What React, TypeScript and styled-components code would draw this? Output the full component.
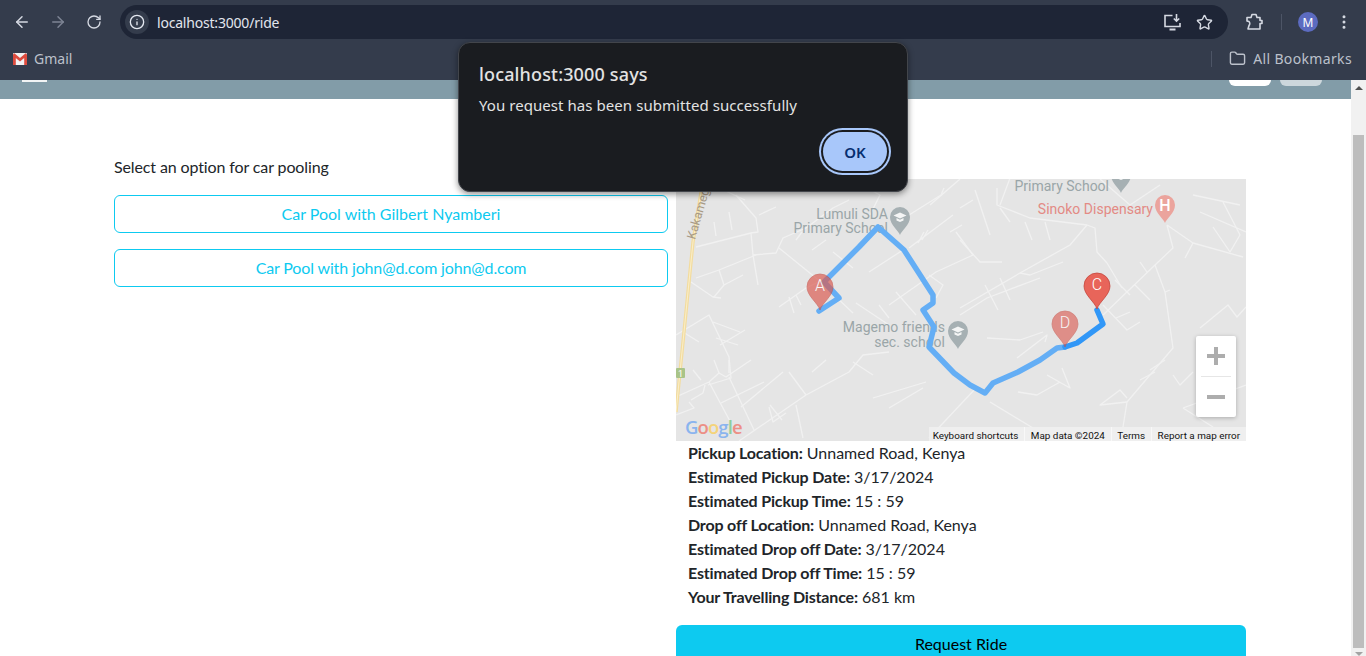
import styled, { createGlobalStyle } from "styled-components";
import {
  ArrowLeft,
  ArrowRight,
  RotateCw,
  Info,
  Star,
  EllipsisVertical,
  Folder,
} from "lucide-react";

const GlobalStyle = createGlobalStyle`
  html, body {
    margin: 0;
    padding: 0;
    width: 1366px;
    height: 656px;
    overflow: hidden;
    background: #fff;
  }
  * { box-sizing: border-box; }
`;

const Window = styled.div`
  position: relative;
  width: 1366px;
  height: 656px;
  overflow: hidden;
  display: flex;
  flex-direction: column;
  font-family: "Lato", sans-serif;
`;

const Toolbar = styled.div`
  height: 44px;
  flex: none;
  background: #343c4c;
  display: flex;
  align-items: center;
  padding: 0 4px;
`;

const NavIcon = styled.div<{ $dim?: boolean; $gap?: number }>`
  width: 36px;
  height: 36px;
  margin-left: ${(p) => p.$gap ?? 0}px;
  display: flex;
  align-items: center;
  justify-content: center;
  color: ${(p) => (p.$dim ? "#7d8494" : "#d5d9e2")};
`;

const Omnibox = styled.div`
  flex: 1;
  height: 34px;
  margin-left: 8px;
  border-radius: 17px;
  background: #1e2536;
  display: flex;
  align-items: center;
  padding: 0 10px 0 5px;
`;

const InfoChip = styled.div`
  width: 24px;
  height: 24px;
  border-radius: 50%;
  background: #343c4c;
  color: #e4e8f0;
  display: flex;
  align-items: center;
  justify-content: center;
`;

const UrlText = styled.span`
  flex: 1;
  margin-left: 8px;
  font-family: "Noto Sans", sans-serif;
  font-size: 14px;
  letter-spacing: -0.2px;
  color: #e2e6ee;
`;

const OmniAction = styled.div`
  width: 28px;
  height: 28px;
  margin-left: 4px;
  display: flex;
  align-items: center;
  justify-content: center;
  color: #d5d9e2;
`;

const ToolDivider = styled.div`
  width: 1px;
  height: 16px;
  background: #4d5566;
  margin: 0 16px 0 9px;
`;

const Avatar = styled.div`
  width: 20px;
  height: 20px;
  border-radius: 50%;
  background: #5c6bc0;
  color: #fff;
  font-family: "Noto Sans", sans-serif;
  font-size: 12px;
  display: flex;
  align-items: center;
  justify-content: center;
`;

const BookmarkBar = styled.div`
  height: 36px;
  flex: none;
  background: #343c4c;
  display: flex;
  align-items: center;
  padding: 0 14px 7px 13px;
  font-family: "Noto Sans", sans-serif;
  font-size: 14px;
  color: #bcc1cb;
`;

const BookmarkGap = styled.div`
  flex: 1;
`;

const BookmarkDivider = styled.div`
  width: 1px;
  height: 16px;
  background: #4d5566;
  margin-right: 17px;
`;

const BookmarkLabel = styled.span<{ $wide?: boolean }>`
  margin-left: 7px;
  letter-spacing: ${(p) => (p.$wide ? "0.35px" : "0")};
`;

const Viewport = styled.div`
  flex: 1;
  min-height: 0;
  display: flex;
  background: #fff;
`;

const Page = styled.div`
  flex: 1;
  min-width: 0;
  overflow: hidden;
`;

const TopNav = styled.div`
  height: 19px;
  background: #829ca8;
  display: flex;
  justify-content: space-between;
  padding: 0 29px 0 22px;
`;

const NavLine = styled.div`
  width: 25px;
  height: 2px;
  background: #f2f4f5;
`;

const NavButtons = styled.div`
  display: flex;
  gap: 9px;
`;

const NavButton = styled.div<{ $muted?: boolean }>`
  width: 42px;
  height: 6px;
  border-radius: 0 0 6px 6px;
  background: ${(p) => (p.$muted ? "#cdd7dc" : "#fff")};
`;

const Content = styled.div`
  display: grid;
  grid-template-columns: 554px 570px;
  column-gap: 8px;
  padding: 60px 0 0 114px;
`;

const LeftColumn = styled.div`
  display: flex;
  flex-direction: column;
`;

const Prompt = styled.p`
  margin: 0 0 20px;
  height: 16px;
  line-height: 16px;
  font-size: 16px;
  letter-spacing: -0.12px;
  color: #212529;
`;

const OptionButton = styled.button<{ $tight?: boolean }>`
  height: 38px;
  margin-bottom: 16px;
  padding: 0 0 2px;
  border: 1px solid #0dcaf0;
  border-radius: 6px;
  background: #fff;
  color: #0dcaf0;
  font-family: "Lato", sans-serif;
  font-size: 16px;
  letter-spacing: ${(p) => (p.$tight ? "-0.14px" : "0")};
`;

const RightColumn = styled.div`
  display: flex;
  flex-direction: column;
  margin-top: 20px;
`;

const MapBox = styled.div`
  position: relative;
  height: 262px;
  overflow: hidden;
  background: #e5e5e5;
`;

const MapArt = styled.svg`
  display: block;
  width: 570px;
  height: 262px;
`;

const GoogleMark = styled.div`
  position: absolute;
  left: 9px;
  bottom: 3px;
  font-family: "Open Sans", sans-serif;
  font-size: 18.5px;
  font-weight: 600;
  letter-spacing: -0.9px;
  line-height: 22px;
`;

const GoogleLetter = styled.span<{ $color: string }>`
  color: ${(p) => p.$color};
`;

const Attribution = styled.div`
  position: absolute;
  right: 0;
  bottom: 0;
  height: 14px;
  display: flex;
  background: rgba(240, 240, 240, 0.9);
  font-family: "Roboto", sans-serif;
  font-size: 9.9px;
  line-height: 17px;
  color: #111;
`;

const AttributionItem = styled.span`
  padding: 0 6px 0 5.5px;
  border-left: 1px solid #f8f8f8;
  white-space: nowrap;

  &:first-child {
    border-left: 0;
    padding-left: 4px;
  }
`;

const ZoomControl = styled.div`
  position: absolute;
  left: 520px;
  top: 157px;
  width: 40px;
  height: 81px;
  background: #fff;
  border-radius: 2px;
  box-shadow: 0 1px 4px rgba(0, 0, 0, 0.25);
  display: flex;
  flex-direction: column;
  align-items: center;
`;

const ZoomButton = styled.div`
  flex: 1;
  display: flex;
  align-items: center;
  justify-content: center;
`;

const ZoomDivider = styled.div`
  width: 30px;
  height: 1px;
  background: #e6e6e6;
`;

const Details = styled.div`
  padding: 0 12px;
  font-size: 16px;
  line-height: 24px;
  color: #212529;
`;

const DetailRow = styled.div`
  white-space: nowrap;
`;

const DetailLabel = styled.b`
  font-weight: 700;
  letter-spacing: -0.17px;
`;

const RequestButton = styled.button`
  flex: none;
  height: 38px;
  margin-top: 16px;
  padding: 0 0 2px;
  border: 0;
  border-radius: 6px;
  background: #0dcaf0;
  color: #000;
  font-family: "Lato", sans-serif;
  font-size: 16px;
`;

const Scrollbar = styled.div`
  width: 15px;
  flex: none;
  background: #f1f1f1;
  display: flex;
  flex-direction: column;
  align-items: center;
`;

const ScrollArrow = styled.div<{ $down?: boolean }>`
  flex: none;
  height: ${(p) => (p.$down ? "8px" : "15px")};
  width: 15px;
  display: flex;
  justify-content: center;
  align-items: ${(p) => (p.$down ? "flex-end" : "center")};

  &::after {
    content: "";
    border-left: 4px solid transparent;
    border-right: 4px solid transparent;
    ${(p) =>
      p.$down
        ? "border-top: 4px solid #a3a3a3;"
        : "border-bottom: 4px solid #505050;"}
  }
`;

const ScrollTrack = styled.div`
  flex: 1;
  width: 100%;
  padding: 40px 2px 0;
  display: flex;
`;

const ScrollThumb = styled.div`
  flex: 1;
  background: #bdbdbd;
`;

const Dialog = styled.div`
  position: absolute;
  left: 458px;
  top: 42px;
  width: 450px;
  height: 150px;
  padding: 19px 20px 20px 20px;
  background: #1a1c20;
  border: 1px solid #42454b;
  border-radius: 12px;
  box-shadow: 0 2px 6px rgba(0, 0, 0, 0.45);
  display: flex;
  flex-direction: column;
  font-family: "Noto Sans", sans-serif;
`;

const DialogTitle = styled.div`
  font-size: 18px;
  line-height: 24px;
  font-weight: 500;
  letter-spacing: 0.15px;
  color: #e3e3e3;
`;

const DialogBody = styled.div`
  margin-top: 9px;
  font-size: 15px;
  line-height: 20px;
  letter-spacing: 0.06px;
  color: #e3e3e3;
`;

const DialogActions = styled.div`
  margin-top: auto;
  display: flex;
  justify-content: flex-end;
`;

const OkButton = styled.button`
  width: 64px;
  height: 39px;
  border: 0;
  border-radius: 20px;
  background: #a8c7fa;
  color: #062e6f;
  font-family: "Noto Sans", sans-serif;
  font-size: 15px;
  font-weight: 600;
  box-shadow: 0 0 0 2px #1a1c20, 0 0 0 4px #a8c7fa;
`;

const roads: string[] = [
  "M696 247 L751 233 L753 255 L776 253 L783 238 L806 228 L833 208 L849 200",
  "M736 195 L756 218 L758 232 L751 233 M759 215 L776 207 M716 236 L714 222 M732 230 L729 212",
  "M696 278 L719 270 L756 255 M719 270 L724 285 L743 275 M691 282 L713 297 L721 298 M724 285 L714 297",
  "M753 255 L758 285 M779 307 L806 288 L833 275 L859 247 M789 297 L794 313 M796 295 L801 305",
  "M779 248 L816 278 L853 313 M833 252 L853 268 M869 272 L903 250 M796 240 L802 232 M812 250 L826 240",
  "M909 248 L953 215 M944 188 L941 195 L909 215 M956 232 L973 255 L936 272 L889 305 M918 243 L924 232 M922 240 L928 230",
  "M896 292 L916 315 M856 303 L889 325 M879 305 L889 318 M929 275 L943 285 L936 298 M950 232 L962 225",
  "M676 335 L709 315 L729 357 L731 378 L708 385 M683 332 L699 342 M713 322 L740 332 M720 345 L745 330 M716 338 L738 345",
  "M676 397 L709 382 L719 373 L726 377 L751 360 M709 382 L731 423 M729 377 L754 430",
  "M721 403 L764 382 M741 407 L783 372 M689 402 L694 408 L676 415 M691 400 L703 393 L705 385",
  "M769 407 L773 422 L786 413 M693 370 L701 380 M714 360 L719 373 M729 360 L729 373",
  "M739 441 L806 395 L789 372 M806 395 L849 372 L863 355 L889 352 M853 362 L873 375 M812 372 L826 360",
  "M873 398 L926 382 M889 408 L923 388 M929 438 L976 388 M796 405 L803 438 M770 405 L782 420",
  "M700 179 L745 200 M850 179 L880 195 L870 215 M960 179 L930 205",
  "M997 188 L997 205 L1030 218 L1087 225 L1095 228 L1097 252 L1107 263 L1122 288",
  "M1087 225 L1070 245 L1020 273 L960 308 M960 240 L980 262 L1002 262 M973 200 L960 208 M1025 222 L1032 240 M1045 222 L1050 240",
  "M1020 273 L1030 275 L1063 262 M975 190 L990 235 M1000 208 L1010 222 M985 285 L998 310 M1000 278 L1010 300",
  "M1167 225 L1173 248 L1155 265 L1103 315 M1167 225 L1193 243 L1243 257 M1147 272 L1140 262 M1135 285 L1150 300",
  "M1155 265 L1165 292 L1173 348 L1127 402 L1123 427 M1103 305 L1127 330 L1140 322 M1116 318 L1130 312 M1115 280 L1130 295",
  "M1193 243 L1185 258 M1213 227 L1230 252 L1240 235 L1223 202 M1193 195 L1240 205 M1200 212 L1246 232",
  "M1200 328 L1228 305 L1237 317 L1246 307 M1173 375 L1180 385 L1193 372 M1165 292 L1170 290",
  "M1127 402 L1100 405 L1120 390 L1127 398 M960 315 L987 298 L1040 278 M1017 358 L1047 335 L1045 342",
  "M987 338 L1020 340 L1043 332 M1047 375 L1070 388 L1062 368 M990 402 L1033 428 M1018 392 L1037 395 L1060 382",
  "M1183 408 L1213 427 M1183 408 L1246 385 M1010 178 L1000 205 M1100 179 L1130 205 L1160 185 M1150 370 L1165 360 M1140 380 L1155 372",
];

function Pin({
  x,
  tip,
  color,
  stroke,
  label,
  opacity,
}: {
  x: number;
  tip: number;
  color: string;
  stroke: string;
  label: string;
  opacity: number;
}) {
  const cy = tip - 23;
  return (
    <g opacity={opacity}>
      <path
        d={`M${x} ${tip} C${x - 2} ${tip - 7} ${x - 13} ${cy + 9} ${x - 13} ${cy} A13 13 0 1 1 ${x + 13} ${cy} C${x + 13} ${cy + 9} ${x + 2} ${tip - 7} ${x} ${tip} Z`}
        fill={color}
        stroke={stroke}
        strokeWidth="0.8"
      />
      <text
        x={x}
        y={cy + 4}
        textAnchor="middle"
        fontFamily="Roboto, sans-serif"
        fontSize="16"
        fontWeight="300"
        fill="#fff"
      >
        {label}
      </text>
    </g>
  );
}

function PoiPin({ x, y, color, icon }: { x: number; y: number; color: string; icon: "school" | "H" }) {
  return (
    <g>
      <path
        d={`M${x} ${y + 18} C${x - 1} ${y + 14} ${x - 10} ${y + 8} ${x - 10} ${y} A10 10 0 1 1 ${x + 10} ${y} C${x + 10} ${y + 8} ${x + 1} ${y + 14} ${x} ${y + 18} Z`}
        fill={color}
      />
      {icon === "school" ? (
        <path
          d={`M${x - 6.5} ${y - 1.5} L${x} ${y - 4.5} L${x + 6.5} ${y - 1.5} L${x} ${y + 1.5} Z M${x - 3.5} ${y + 1} L${x} ${y + 2.7} L${x + 3.5} ${y + 1} L${x + 3.5} ${y + 3.5} L${x} ${y + 5} L${x - 3.5} ${y + 3.5} Z`}
          fill="#f4f5f5"
        />
      ) : (
        <text x={x} y={y + 6} textAnchor="middle" fontFamily="Roboto, sans-serif" fontSize="16" fontWeight="500" fill="#fff">
          H
        </text>
      )}
    </g>
  );
}

function MapLabel({ x, y, color, children }: { x: number; y: number; color: string; children: string }) {
  return (
    <text x={x} y={y} textAnchor="end" fontFamily="Roboto, sans-serif" fontSize="14" fill={color}>
      {children}
    </text>
  );
}

function RouteMap() {
  const firstLeg =
    "M819 311 L839 298 L824 282 L859 247 L878 227 L904 250 L933 295 L933 303 L923 310 L934 327 L929 347 L954 373 L970 385 L985 393 L993 383 L1018 372 L1040 360 L1057 348 L1065 347";
  const secondLeg = "M1065 347 L1077 343 L1103 324 L1097 310";
  return (
    <MapArt viewBox="676 179 570 262">
      <rect x="676" y="179" width="570" height="262" fill="#e5e5e5" />
      <g fill="none" stroke="#f1f1f1" strokeWidth="1.3" strokeLinejoin="round">
        {roads.map((d) => (
          <path key={d} d={d} />
        ))}
      </g>
      <path d="M703 180 L693 242 L676 412" fill="none" stroke="#f3dc9e" strokeWidth="3.4" />
      <path d="M703 180 L693 242 L676 412" fill="none" stroke="#f9eecb" strokeWidth="1" />
      <rect x="676" y="368" width="9" height="10" rx="1" fill="#a9c488" />
      <text x="678" y="376.5" fontFamily="Roboto, sans-serif" fontSize="9" fill="#fff">
        1
      </text>
      <text
        transform="translate(695 240) rotate(-74)"
        fontFamily="Roboto, sans-serif"
        fontSize="12.5"
        fill="#a89a86"
      >
        Kakamega
      </text>

      <MapLabel x={888} y={219} color="#9aa5a8">Lumuli SDA</MapLabel>
      <MapLabel x={888} y={233} color="#9aa5a8">Primary School</MapLabel>
      <MapLabel x={945} y={332} color="#9aa5a8">Magemo friends</MapLabel>
      <MapLabel x={945} y={347} color="#9aa5a8">sec. school</MapLabel>
      <MapLabel x={1109} y={191} color="#9aa5a8">Primary School</MapLabel>
      <MapLabel x={1153} y={214} color="#e38a84">Sinoko Dispensary</MapLabel>
      <PoiPin x={900} y={217} color="#a6b0b3" icon="school" />
      <PoiPin x={958} y={331} color="#a6b0b3" icon="school" />
      <PoiPin x={1121} y={175} color="#a6b0b3" icon="school" />
      <PoiPin x={1165} y={205} color="#eba49d" icon="H" />

      <path d={firstLeg} fill="none" stroke="#64aef5" strokeWidth="5.5" strokeLinejoin="round" strokeLinecap="round" />
      <path d={secondLeg} fill="none" stroke="#3197f7" strokeWidth="5.5" strokeLinejoin="round" strokeLinecap="round" />

      <Pin x={820} tip={310} color="#db5a50" stroke="#c4463c" label="A" opacity={0.68} />
      <Pin x={1065} tip={347} color="#db5a50" stroke="#c4463c" label="D" opacity={0.62} />
      <Pin x={1097} tip={309} color="#e8655a" stroke="#c4463c" label="C" opacity={1} />
    </MapArt>
  );
}

function GmailIcon() {
  return (
    <svg width="14" height="12" viewBox="0 0 15 12" preserveAspectRatio="none">
      <rect width="15" height="12" rx="1" fill="#f2f2f2" />
      <path d="M0 1.5 V12 H3 V5 L7.5 8.5 L12 5 V12 H15 V1.5 L13.5 0.3 L7.5 5 L1.5 0.3 Z" fill="#dd4b3e" />
    </svg>
  );
}

function PuzzleIcon() {
  return (
    <svg width="20" height="20" viewBox="0 0 20 20" fill="none" stroke="#d5d9e2" strokeWidth="1.6" strokeLinejoin="round">
      <path d="M3 5.5 H7 L8 2.5 H12 L13 5.5 H16 V8.5 H18 V11.5 H16 V17 H4 L5 13.5 C6 12.5 6 10.5 5 9.5 L3 9 Z" />
    </svg>
  );
}

function InstallIcon() {
  return (
    <svg width="19" height="19" viewBox="0 0 19 19" fill="none" stroke="#d5d9e2" strokeWidth="1.6">
      <path d="M9.5 2.5 H2 V13.5 H17 V10" />
      <path d="M6.5 16.5 H12.5" strokeWidth="2" />
      <path d="M13.5 1 V8 M10.8 5.5 L13.5 8.2 L16.2 5.5" />
    </svg>
  );
}

const details = [
  ["Pickup Location:", "Unnamed Road, Kenya"],
  ["Estimated Pickup Date:", "3/17/2024"],
  ["Estimated Pickup Time:", "15 : 59"],
  ["Drop off Location:", "Unnamed Road, Kenya"],
  ["Estimated Drop off Date:", "3/17/2024"],
  ["Estimated Drop off Time:", "15 : 59"],
  ["Your Travelling Distance:", "681 km"],
];

const App = () => {
  return (
    <Window>
      <GlobalStyle />
      <Toolbar>
        <NavIcon>
          <ArrowLeft size={18} />
        </NavIcon>
        <NavIcon $dim>
          <ArrowRight size={18} />
        </NavIcon>
        <NavIcon>
          <RotateCw size={16} />
        </NavIcon>
        <Omnibox>
          <InfoChip>
            <Info size={16} />
          </InfoChip>
          <UrlText>localhost:3000/ride</UrlText>
          <OmniAction>
            <InstallIcon />
          </OmniAction>
          <OmniAction>
            <Star size={17} />
          </OmniAction>
        </Omnibox>
        <NavIcon $gap={8}>
          <PuzzleIcon />
        </NavIcon>
        <ToolDivider />
        <Avatar>M</Avatar>
        <NavIcon $gap={8}>
          <EllipsisVertical size={18} />
        </NavIcon>
      </Toolbar>
      <BookmarkBar>
        <GmailIcon />
        <BookmarkLabel>Gmail</BookmarkLabel>
        <BookmarkGap />
        <BookmarkDivider />
        <Folder size={17} />
        <BookmarkLabel $wide>All Bookmarks</BookmarkLabel>
      </BookmarkBar>
      <Viewport>
        <Page>
          <TopNav>
            <NavLine />
            <NavButtons>
              <NavButton />
              <NavButton $muted />
            </NavButtons>
          </TopNav>
          <Content>
            <LeftColumn>
              <Prompt>Select an option for car pooling</Prompt>
              <OptionButton>Car Pool with Gilbert Nyamberi</OptionButton>
              <OptionButton $tight>Car Pool with john@d.com john@d.com</OptionButton>
            </LeftColumn>
            <RightColumn>
              <MapBox>
                <RouteMap />
                <GoogleMark>
                  <GoogleLetter $color="#8ab4ee">G</GoogleLetter>
                  <GoogleLetter $color="#ec8f86">o</GoogleLetter>
                  <GoogleLetter $color="#f4d37a">o</GoogleLetter>
                  <GoogleLetter $color="#8ab4ee">g</GoogleLetter>
                  <GoogleLetter $color="#8fcf9b">l</GoogleLetter>
                  <GoogleLetter $color="#ec8f86">e</GoogleLetter>
                </GoogleMark>
                <ZoomControl>
                  <ZoomButton>
                    <svg width="18" height="18" viewBox="0 0 18 18">
                      <path d="M7 0 H11 V7 H18 V11 H11 V18 H7 V11 H0 V7 H7 Z" fill="#adadad" />
                    </svg>
                  </ZoomButton>
                  <ZoomDivider />
                  <ZoomButton>
                    <svg width="18" height="4" viewBox="0 0 18 4">
                      <rect width="18" height="4" fill="#adadad" />
                    </svg>
                  </ZoomButton>
                </ZoomControl>
                <Attribution>
                  <AttributionItem>Keyboard shortcuts</AttributionItem>
                  <AttributionItem>Map data ©2024</AttributionItem>
                  <AttributionItem>Terms</AttributionItem>
                  <AttributionItem>Report a map error</AttributionItem>
                </Attribution>
              </MapBox>
              <Details>
                {details.map(([label, value]) => (
                  <DetailRow key={label}>
                    <DetailLabel>{label}</DetailLabel> {value}
                  </DetailRow>
                ))}
              </Details>
              <RequestButton>Request Ride</RequestButton>
            </RightColumn>
          </Content>
        </Page>
        <Scrollbar>
          <ScrollArrow />
          <ScrollTrack>
            <ScrollThumb />
          </ScrollTrack>
          <ScrollArrow $down />
        </Scrollbar>
      </Viewport>
      <Dialog>
        <DialogTitle>localhost:3000 says</DialogTitle>
        <DialogBody>You request has been submitted successfully</DialogBody>
        <DialogActions>
          <OkButton>OK</OkButton>
        </DialogActions>
      </Dialog>
    </Window>
  );
};

export default App;
